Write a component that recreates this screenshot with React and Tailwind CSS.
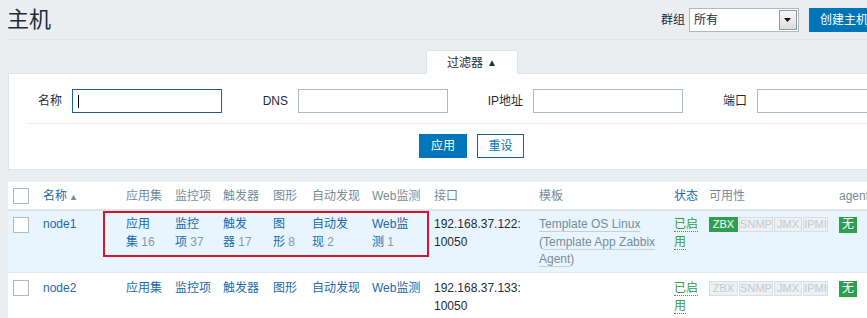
import React from 'react';

const font = { fontFamily: '"Liberation Sans", Arial, "Noto Sans CJK SC", sans-serif' };

const cols = 'grid grid-cols-[30px_83px_49px_48px_50px_39px_60px_62px_105px_135px_35px_130px_101px]';

function Checkbox() {
  return <div className="w-[16px] h-[16px] bg-white border border-[#acbbc2]" />;
}

function Badge({ label, on, w }) {
  return (
    <span
      className={`h-[15px] flex items-center justify-center text-[11px] leading-none ${w} ${
        on ? 'bg-[#2f9f4f] text-white border border-[#2f9f4f]' : 'bg-[#eef0f1] text-[#c3cbd0] border border-[#d9dee1]'
      }`}
    >
      {label}
    </span>
  );
}

function Availability({ zbx }) {
  return (
    <div className="flex gap-px">
      <Badge label="ZBX" on={zbx} w="w-[29px]" />
      <Badge label="SNMP" w="w-[34px]" />
      <Badge label="JMX" w="w-[28px]" />
      <Badge label="IPMI" w="w-[25px]" />
    </div>
  );
}

function Status() {
  return (
    <div className="text-[#3c9b3c]">
      <span className="border-b border-dotted border-[#3c9b3c]">已启</span>
      <br />
      <span className="border-b border-dotted border-[#3c9b3c]">用</span>
    </div>
  );
}

function Count({ top, rest, n }) {
  return (
    <div className="text-[#2369a8]">
      <div>{top}</div>
      <div>
        {rest} <span className="text-[#8a9aa3]">{n}</span>
      </div>
    </div>
  );
}

export default function App() {
  const headers = ['应用集', '监控项', '触发器', '图形', '自动发现', 'Web监测', '接口', '模板'];
  const links = ['应用集', '监控项', '触发器', '图形', '自动发现', 'Web监测'];

  return (
    <div className="w-[867px] h-[318px] overflow-hidden bg-[#ebeef0] text-[12px] text-[#1f2c33]" style={font}>
      <div className="w-[943px] px-[8px]">
        {/* header */}
        <div className="h-[40px] flex items-center justify-between border-b border-[#dfe4e7]">
          <h1 className="text-[22px] leading-none -ml-px" style={font}>主机</h1>
          <div className="flex items-center">
            <span className="mr-[4px]">群组</span>
            <div className="w-[110px] h-[24px] bg-white border border-[#acbbc2] flex items-center justify-between pl-[4px] pr-px">
              <span>所有</span>
              <div className="w-[18px] h-[20px] border border-[#8e9aa1] bg-gradient-to-b from-[#f8f8f8] to-[#dcdcdc] flex items-center justify-center">
                <svg width="7" height="4" viewBox="0 0 7 4"><path d="M0 0h7L3.5 4z" fill="#111" /></svg>
              </div>
            </div>
            <button className="ml-[10px] h-[24px] px-[11px] bg-[#0275b8] text-white">创建主机</button>
            <button className="ml-[10px] h-[24px] px-[11px] bg-[#0275b8] text-white">导入</button>
          </div>
        </div>

        {/* filter */}
        <div className="mt-[10px]">
          <div className="relative z-10 ml-[418px] w-[92px] h-[24px] -mb-px bg-white border border-b-0 border-[#dfe4e7] flex items-center justify-center">
            过滤器 <span className="ml-[4px] text-[10px]">▲</span>
          </div>
          <div className="bg-white border border-[#dfe4e7]">
            <div className="flex items-center pt-[15px]">
              <label className="w-[63px] pr-[10px] text-right">名称</label>
              <div className="relative w-[150px] h-[24px] border border-[#1f5f8f] bg-white">
                <span className="absolute left-[5px] top-[5px] w-px h-[13px] bg-black" />
              </div>
              <label className="w-[76px] pr-[10px] text-right">DNS</label>
              <div className="w-[150px] h-[24px] border border-[#acbbc2] bg-white" />
              <label className="w-[85px] pr-[10px] text-right">IP地址</label>
              <div className="w-[150px] h-[24px] border border-[#acbbc2] bg-white" />
              <label className="w-[74px] pr-[10px] text-right">端口</label>
              <div className="w-[150px] h-[24px] border border-[#acbbc2] bg-white" />
            </div>
            <div className="mx-[18px] mt-[10px] border-t border-[#ebeef0]" />
            <div className="flex justify-center gap-[10px] pt-[10px] pb-[11px]">
              <button className="w-[48px] h-[24px] bg-[#0275b8] text-white">应用</button>
              <button className="w-[47px] h-[24px] bg-white border border-[#1f5f8f] text-[#0275b8]">重设</button>
            </div>
          </div>
        </div>

        {/* table */}
        <div className="mt-[12px] bg-white">
          <div className={`${cols} h-[29px] items-center border-b-2 border-[#dfe4e7] text-[#768d99]`}>
            <div className="pl-[5px]"><Checkbox /></div>
            <div className="pl-[5px] text-[#2369a8]">名称<span className="ml-[2px] text-[9px] text-[#768d99]">▲</span></div>
            {headers.map((h) => (
              <div key={h} className="pl-[5px] whitespace-nowrap">{h}</div>
            ))}
            <div className="pl-[5px] text-[#2369a8]">状态</div>
            <div className="pl-[5px]">可用性</div>
            <div className="pl-[5px]">agent</div>
          </div>

          <div className={`${cols} relative h-[62px] bg-[#e8f5ff] leading-[17.5px] pt-[5px] border-b border-[#e2e8ec]`}>
            <div className="pl-[5px] pt-px"><Checkbox /></div>
            <div className="pl-[5px] text-[#2369a8]">node1</div>
            <div className="pl-[5px]"><Count top="应用" rest="集" n="16" /></div>
            <div className="pl-[5px]"><Count top="监控" rest="项" n="37" /></div>
            <div className="pl-[5px]"><Count top="触发" rest="器" n="17" /></div>
            <div className="pl-[5px]"><Count top="图" rest="形" n="8" /></div>
            <div className="pl-[5px]"><Count top="自动发" rest="现" n="2" /></div>
            <div className="pl-[5px]"><Count top="Web监" rest="测" n="1" /></div>
            <div className="pl-[5px]">192.168.37.122:<br />10050</div>
            <div className="pl-[5px] text-[#768d99]">
              <span className="border-b border-[#c6d0d6]">Template OS Linux</span>
              <br />
              (<span className="border-b border-[#c6d0d6]">Template App Zabbix</span>
              <br />
              <span className="border-b border-[#c6d0d6]">Agent</span>)
            </div>
            <div className="pl-[5px]"><Status /></div>
            <div className="pl-[5px] pt-px"><Availability zbx /></div>
            <div className="pl-[5px] pt-px">
              <span className="w-[18px] h-[16px] bg-[#2f9f4f] text-white flex items-center justify-center">无</span>
            </div>
            <div className="absolute left-[95px] top-0 w-[326px] h-[46px] border-2 border-[#d4142d]" />
          </div>

          <div className={`${cols} h-[60px] leading-[17.5px] pt-[7px]`}>
            <div className="pl-[5px]"><Checkbox /></div>
            <div className="pl-[5px] text-[#2369a8]">node2</div>
            {links.map((l) => (
              <div key={l} className="pl-[5px] text-[#2369a8] whitespace-nowrap">{l}</div>
            ))}
            <div className="pl-[5px]">192.168.37.133:<br />10050</div>
            <div />
            <div className="pl-[5px]"><Status /></div>
            <div className="pl-[5px] pt-px"><Availability /></div>
            <div className="pl-[5px] pt-px">
              <span className="w-[18px] h-[16px] bg-[#2f9f4f] text-white flex items-center justify-center">无</span>
            </div>
          </div>
        </div>
      </div>
    </div>
  );
}
